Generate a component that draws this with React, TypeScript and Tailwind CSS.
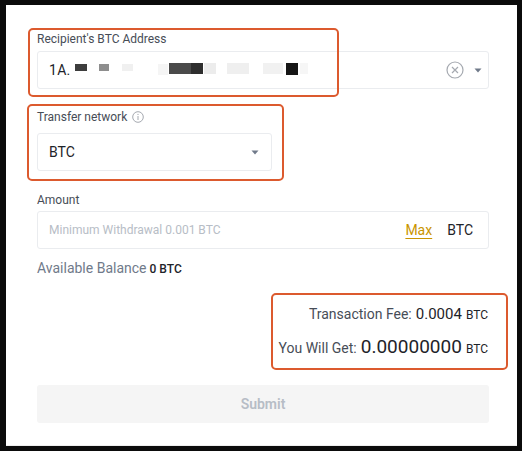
import React from "react";

const Caret = () => (
  <svg width="8" height="5" viewBox="0 0 8 5" className="block">
    <path d="M0.5 0.5 L7.5 0.5 L4 4.5 Z" fill="#707a8a" />
  </svg>
);

export default function App() {
  return (
    <div
      className="w-[522px] h-[451px] bg-[#0b0b0b] pt-[5px] pl-[6px] pr-[5px] pb-[5px]"
      style={{ fontFamily: "Roboto, 'Noto Sans', sans-serif" }}
    >
      <div className="relative w-full h-full bg-white pl-[31px] pr-[28px] pt-[26px] border-b border-[#eeeeee]">
        {/* Address */}
        <div className="text-[12px] leading-[16px] text-[#474d57]">Recipient's BTC Address</div>
        <div className="mt-[4px] h-[38px] rounded-[3px] border border-[#eaecef] flex items-center pl-[11px] pr-[6px]">
          <span className="text-[14px] text-[#1e2329] tracking-[0.3px]">1A.</span>
          <div className="flex-1 relative h-full">
            <span className="absolute left-[4px] top-[12px] w-[12px] h-[7px] bg-[#3d3d3d]" />
            <span className="absolute left-[28px] top-[12px] w-[10px] h-[7px] bg-[#8e8e8e]" />
            <span className="absolute left-[51px] top-[12px] w-[11px] h-[7px] bg-[#f0f0f0]" />
            <span className="absolute left-[87px] top-[12px] w-[10px] h-[11px] bg-[#f5f5f5]" />
            <span className="absolute left-[98px] top-[11px] w-[22px] h-[11px] bg-[#4a4a4a]" />
            <span className="absolute left-[120px] top-[11px] w-[12px] h-[11px] bg-[#2e2e2e]" />
            <span className="absolute left-[133px] top-[11px] w-[12px] h-[11px] bg-[#ececec]" />
            <span className="absolute left-[156px] top-[11px] w-[22px] h-[11px] bg-[#efefef]" />
            <span className="absolute left-[192px] top-[11px] w-[20px] h-[11px] bg-[#f1f1f1]" />
            <span className="absolute left-[215px] top-[11px] w-[12px] h-[12px] bg-[#161616]" />
            <span className="absolute left-[229px] top-[11px] w-[8px] h-[11px] bg-[#f6f6f6]" />
          </div>
          <svg width="18" height="18" viewBox="0 0 18 18" className="mr-[10px]">
            <circle cx="9" cy="9" r="8" fill="none" stroke="#a5a9b0" strokeWidth="1.2" />
            <path d="M6 6 L12 12 M12 6 L6 12" stroke="#a5a9b0" strokeWidth="1.2" />
          </svg>
          <Caret />
        </div>

        {/* Transfer network */}
        <div className="mt-[20px] flex items-center gap-[5px] text-[12px] leading-[16px] text-[#474d57]">
          <span>Transfer network</span>
          <svg width="12" height="12" viewBox="0 0 12 12">
            <circle cx="6" cy="6" r="5.3" fill="none" stroke="#a5a9b0" strokeWidth="1" />
            <path d="M6 5 L6 9" stroke="#a5a9b0" strokeWidth="1" />
            <circle cx="6" cy="3.4" r="0.6" fill="#a5a9b0" />
          </svg>
        </div>
        <div className="mt-[8px] w-[235px] h-[38px] rounded-[3px] border border-[#eaecef] flex items-center pl-[11px] pr-[12px]">
          <span className="flex-1 text-[14px] text-[#1e2329]">BTC</span>
          <Caret />
        </div>

        {/* Amount */}
        <div className="mt-[21px] text-[12px] leading-[16px] text-[#474d57]">Amount</div>
        <div className="mt-[3px] h-[38px] rounded-[3px] border border-[#eaecef] flex items-center pl-[11px] pr-[15px]">
          <span className="flex-1 text-[12px] text-[#b7bdc6]">Minimum Withdrawal 0.001 BTC</span>
          <span className="text-[14px] text-[#c99400] underline underline-offset-[3px] mr-[15px]">Max</span>
          <span className="text-[14px] text-[#1e2329]">BTC</span>
        </div>

        <div className="mt-[11px] text-[14px] leading-[16px] text-[#707a8a] flex items-baseline gap-[3px]">
          <span>Available Balance</span>
          <span className="text-[12px] font-medium text-[#1e2329]">0 BTC</span>
        </div>

        {/* Fees */}
        <div className="mt-[26px] flex flex-col items-end pr-[1px]">
          <div className="flex items-baseline gap-[4px] text-[#1e2329]">
            <span className="text-[14px] text-[#474d57]">Transaction Fee:</span>
            <span className="text-[15px]">0.0004</span>
            <span className="text-[12px]">BTC</span>
          </div>
          <div className="mt-[7px] flex items-baseline gap-[4px] text-[#1e2329]">
            <span className="text-[14px] text-[#474d57]">You Will Get:</span>
            <span className="text-[19px]">0.00000000</span>
            <span className="text-[12px]">BTC</span>
          </div>
        </div>

        {/* Submit */}
        <div className="mt-[24px] h-[38px] rounded-[3px] bg-[#f5f5f5] flex items-center justify-center">
          <span className="text-[14px] font-semibold text-[#b7bdc6]">Submit</span>
        </div>

        {/* Annotation boxes */}
        <div className="absolute left-[22px] top-[23px] w-[311px] h-[69px] border-2 border-[#dc5a2e] rounded-[5px]" />
        <div className="absolute left-[21px] top-[99px] w-[257px] h-[77px] border-2 border-[#dc5a2e] rounded-[5px]" />
        <div className="absolute left-[265px] top-[288px] w-[237px] h-[77px] border-2 border-[#dc5a2e] rounded-[5px]" />
      </div>
    </div>
  );
}
